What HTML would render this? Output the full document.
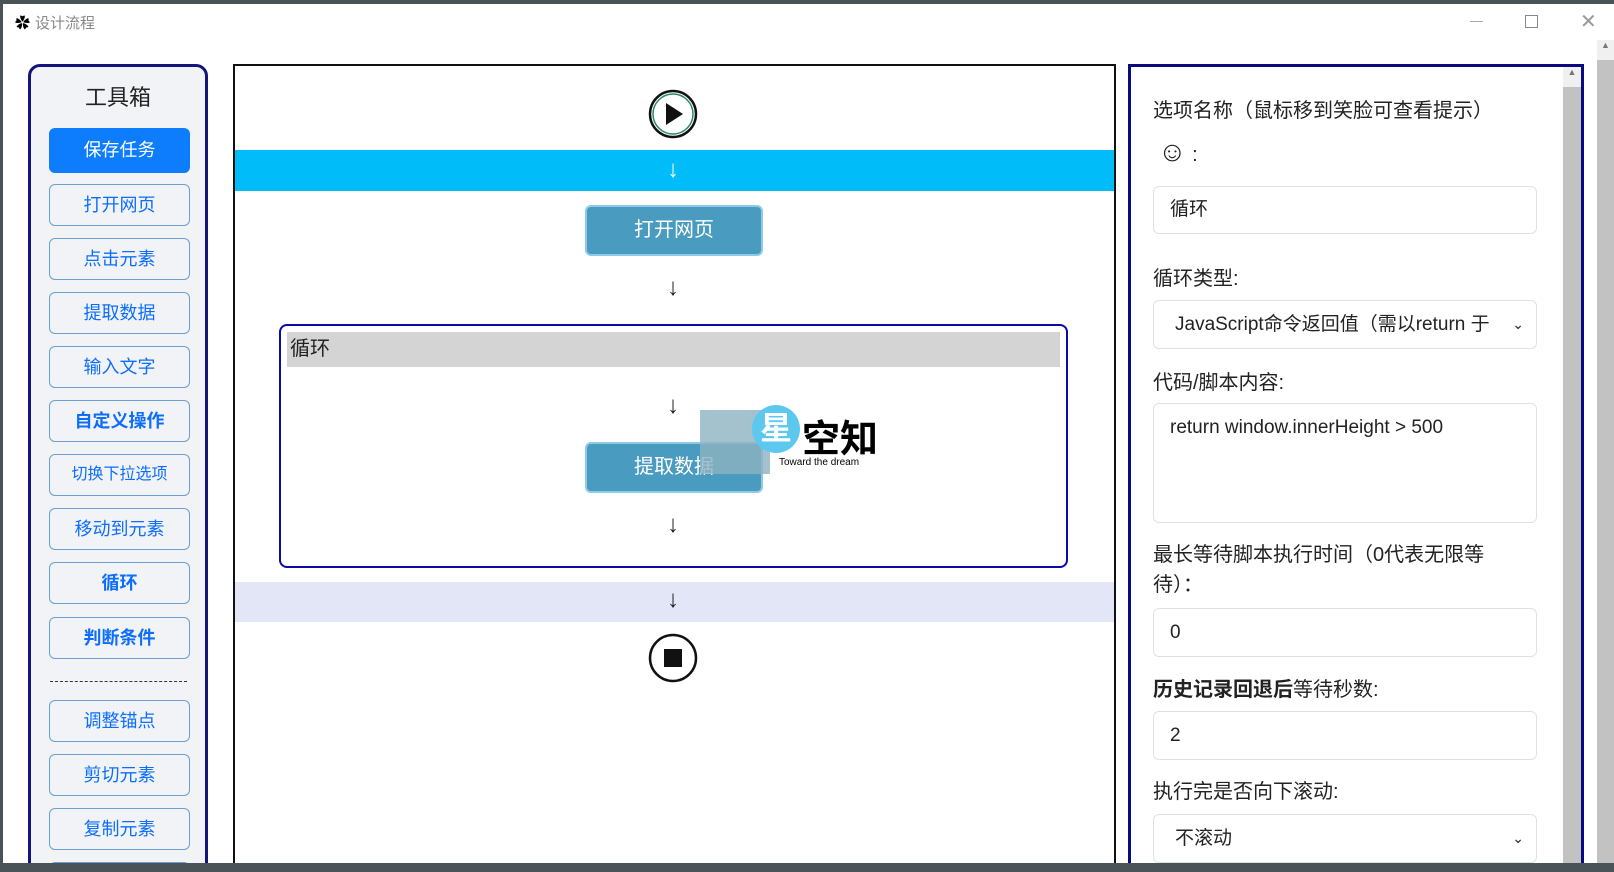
<!DOCTYPE html>
<html><head><meta charset="utf-8"><style>
*{box-sizing:border-box;margin:0;padding:0}
html,body{width:1614px;height:872px;overflow:hidden}
body{position:relative;background:#fff;font-family:"Liberation Sans","Noto Sans CJK SC",sans-serif}
.a{position:absolute}
.btn{position:absolute;left:49px;width:141px;height:42px;border:1px solid #6a9fd0;border-radius:6px;color:#0d6efd;font-size:18px;text-align:center;line-height:40px;background:#f1f3f6}
.lbl{position:absolute;left:1153px;font-size:20px;color:#222}
.inp{position:absolute;left:1153px;width:384px;border:1px solid #dee2e6;border-radius:6px;font-size:19px;color:#222;padding-left:16px;background:#fff}
.node{position:absolute;left:585px;width:178px;height:51px;background:#4a9bc0;border:2px solid #8dcbe8;border-radius:6px;color:#fff;font-size:20px;text-align:center;line-height:46px}
.arr{position:absolute;left:667px;font-size:24px;color:#222}
.top{z-index:10}
#clip{position:absolute;left:0;top:0;width:1614px;height:863px;overflow:hidden}
</style></head><body>
<div id="clip">
<div class="a" style="left:15px;top:12px;font-size:15px">&#10047;</div>
<div class="a" style="left:35px;top:12px;font-size:15px;color:#888">设计流程</div>
<div class="a" style="left:1470px;top:21px;width:13px;height:1px;background:#aaa"></div>
<div class="a" style="left:1525px;top:15px;width:13px;height:13px;border:1px solid #888"></div>
<div class="a" style="left:1580px;top:9px;font-size:20px;color:#999">✕</div>
<div class="a" style="left:28px;top:64px;width:180px;height:820px;border:3px solid #14147a;border-radius:12px;background:#f1f3f6"></div>
<div class="a" style="left:28px;top:80px;width:180px;text-align:center;font-size:22px;color:#222">工具箱</div>
<div class="btn" style="top:128px;height:45px;background:#0d7cfd;border-color:#0d7cfd;color:#fff;line-height:43px">保存任务</div>
<div class="btn" style="top:184px">打开网页</div>
<div class="btn" style="top:238px">点击元素</div>
<div class="btn" style="top:292px">提取数据</div>
<div class="btn" style="top:346px">输入文字</div>
<div class="btn" style="top:400px;font-weight:bold">自定义操作</div>
<div class="btn" style="top:454px;font-size:16px">切换下拉选项</div>
<div class="btn" style="top:508px">移动到元素</div>
<div class="btn" style="top:562px;font-weight:bold">循环</div>
<div class="btn" style="top:617px;font-weight:bold">判断条件</div>
<div class="a" style="left:50px;top:681px;width:137px;border-top:1.5px dashed #333"></div>
<div class="btn" style="top:700px">调整锚点</div>
<div class="btn" style="top:754px">剪切元素</div>
<div class="btn" style="top:808px">复制元素</div>
<div class="btn" style="top:862px">x</div>
<div class="a" style="left:233px;top:64px;width:883px;height:820px;border:2px solid #111;border-bottom:none"></div>
<div class="a" style="left:235px;top:150px;width:879px;height:41px;background:#00bcf8"></div>
<div class="arr" style="top:156px;color:#fff">↓</div>
<svg class="a" style="left:648px;top:89px" width="50" height="50"><circle cx="25" cy="25" r="23" fill="#fff" stroke="#111" stroke-width="2.5"/><circle cx="25" cy="25" r="20" fill="none" stroke="#2a8a6a" stroke-width="1.5"/><path d="M18 14 L35 25 L18 36Z" fill="#111"/></svg>
<div class="node" style="top:205px">打开网页</div>
<div class="arr" style="top:274px">↓</div>
<div class="a" style="left:279px;top:324px;width:789px;height:244px;border:2.5px solid #0a0aa8;border-radius:8px"></div>
<div class="a" style="left:287px;top:332px;width:773px;height:35px;background:#d4d4d4;font-size:20px;line-height:35px;padding-left:3px;color:#222">循环</div>
<div class="arr" style="top:392px">↓</div>
<div class="node" style="top:442px">提取数据</div>
<div class="arr" style="top:511px">↓</div>
<div class="a" style="left:235px;top:582px;width:879px;height:40px;background:#e3e6f7"></div>
<div class="arr" style="top:586px">↓</div>
<svg class="a" style="left:648px;top:633px" width="50" height="50"><circle cx="25" cy="25" r="23" fill="#fff" stroke="#111" stroke-width="2.5"/><rect x="16" y="16" width="18" height="18" fill="#111"/></svg>
<div class="a" style="left:700px;top:410px;width:70px;height:64px;background:#8db3c0;opacity:.8"></div>
<div class="a" style="left:752px;top:405px;width:48px;height:48px;border-radius:50%;background:#5cc8f0;color:#fff;font-size:32px;text-align:center;line-height:46px;font-weight:bold">星</div>
<div class="a" style="left:802px;top:408px;font-size:38px;font-weight:bold;color:#000">空知</div>
<div class="a" style="left:779px;top:457px;font-size:10px;color:#000">Toward the dream</div>
<div class="a" style="left:1128px;top:64px;width:456px;height:820px;border:3px solid #0a0a80;border-bottom:none"></div>
<div class="a" style="left:1563px;top:67px;width:18px;height:800px;background:#c2c2c2"></div>
<div class="a" style="left:1563px;top:67px;width:18px;height:20px;background:#f0f0f0;font-size:9px;text-align:center;color:#777">▲</div>
<div class="a" style="left:1597px;top:40px;width:17px;height:823px;background:#c2c2c2"></div>
<div class="a" style="left:1597px;top:40px;width:17px;height:20px;background:#f0f0f0;font-size:9px;text-align:center;color:#777">▲</div>
<div class="lbl" style="top:94px">选项名称（鼠标移到笑脸可查看提示）</div>
<div class="lbl" style="top:136px;left:1158px;font-size:28px">☺<span style="font-size:20px"> :</span></div>
<div class="inp" style="top:186px;height:48px;line-height:46px">循环</div>
<div class="lbl" style="top:262px">循环类型:</div>
<div class="inp" style="top:300px;height:49px;line-height:47px;padding-left:21px">JavaScript命令返回值（需以return 于<span style="position:absolute;right:12px;font-size:14px">⌄</span></div>
<div class="lbl" style="top:366px">代码/脚本内容:</div>
<div class="inp" style="top:403px;height:120px;padding-top:13px">return window.innerHeight &gt; 500</div>
<div class="lbl" style="top:540px;line-height:30px">最长等待脚本执行时间（0代表无限等<br>待）：</div>
<div class="inp" style="top:608px;height:49px;line-height:47px">0</div>
<div class="lbl" style="top:673px"><b>历史记录回退后</b>等待秒数:</div>
<div class="inp" style="top:711px;height:49px;line-height:47px">2</div>
<div class="lbl" style="top:775px">执行完是否向下滚动:</div>
<div class="inp" style="top:814px;height:49px;line-height:47px;padding-left:21px">不滚动<span style="position:absolute;right:12px;font-size:14px">⌄</span></div>
</div>
<div class="a top" style="left:0;top:0;width:1614px;height:4px;background:#4a5358"></div>
<div class="a top" style="left:0;top:0;width:3px;height:872px;background:#4a5358"></div>
<div class="a top" style="left:0;top:863px;width:1614px;height:9px;background:#4a5358"></div>
</body></html>
